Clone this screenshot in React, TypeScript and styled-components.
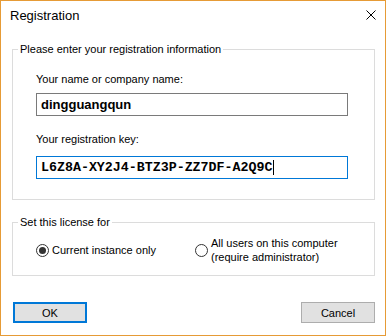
import React from "react";
import styled, { createGlobalStyle } from "styled-components";

const GlobalStyle = createGlobalStyle`
  * {
    box-sizing: border-box;
  }
  body {
    margin: 0;
    background: #fff;
  }
`;

const Window = styled.div`
  width: 386px;
  height: 336px;
  border: 1px solid #e69b36;
  background: #fff;
  display: flex;
  flex-direction: column;
  font-family: "Liberation Sans", Arial, sans-serif;
  font-size: 11px;
  color: #000;
`;

const TitleBar = styled.div`
  height: 30px;
  display: flex;
  justify-content: space-between;
  padding: 0 9px;
`;

const Title = styled.span`
  font-size: 13px;
  line-height: 30px;
`;

const CloseButton = styled.span`
  display: flex;
  margin-top: 9px;
  height: 10px;
`;

const Group = styled.fieldset<{ $top: number }>`
  margin: ${(p) => p.$top}px 10px 0 11px;
  padding: 0 5px;
  min-width: 0;
  border: 1px solid #dcdcdc;
`;

const Legend = styled.legend`
  padding: 0 2px;
  line-height: 13px;
`;

const GroupBody = styled.div<{ $pt: number; $pb: number }>`
  display: flex;
  flex-direction: column;
  padding: ${(p) => p.$pt}px 21px ${(p) => p.$pb}px 18px;
`;

const Label = styled.label<{ $top?: number }>`
  display: block;
  line-height: 13px;
  margin-top: ${(p) => p.$top ?? 0}px;
`;

const Field = styled.div<{ $focused?: boolean; $mono?: boolean; $gap: number }>`
  margin-top: ${(p) => p.$gap}px;
  height: 23px;
  display: flex;
  align-items: center;
  padding: 0 4px;
  border: 1px solid ${(p) => (p.$focused ? "#0078d7" : "#7a7a7a")};
  font-weight: bold;
  font-family: ${(p) =>
    p.$mono ? '"Liberation Mono", "Courier New", monospace' : '"Liberation Sans", Arial, sans-serif'};
  font-size: ${(p) => (p.$mono ? "13.3px" : "13px")};
  white-space: pre;
`;

const Caret = styled.span`
  width: 1px;
  height: 15px;
  margin-left: 1px;
  background: #000;
`;

const Options = styled.div`
  display: grid;
  grid-template-columns: 159px auto;
  align-items: center;
`;

const Option = styled.label`
  display: flex;
  align-items: center;
  gap: 3px;
  line-height: 14px;
`;

const Circle = styled.span<{ $checked?: boolean }>`
  flex: none;
  width: 13px;
  height: 13px;
  border: 1px solid #333;
  border-radius: 50%;
  display: grid;
  place-items: center;

  &::after {
    content: "";
    width: 7px;
    height: 7px;
    border-radius: 50%;
    background: ${(p) => (p.$checked ? "#333" : "transparent")};
  }
`;

const Buttons = styled.div`
  display: flex;
  justify-content: space-between;
  margin: 26px 10px 0 12px;
`;

const Button = styled.button<{ $default?: boolean }>`
  width: 74px;
  height: 21px;
  padding: 0;
  background: #e1e1e1;
  border: ${(p) => (p.$default ? "2px solid #0078d7" : "1px solid #adadad")};
  font-family: inherit;
  font-size: 11px;
  color: #000;
`;

const App: React.FC = () => {
  return (
    <>
      <GlobalStyle />
      <Window>
        <TitleBar>
          <Title>Registration</Title>
          <CloseButton>
            <svg width="10" height="10" viewBox="0 0 10 10">
              <path d="M0.5 0.5L9.5 9.5M9.5 0.5L0.5 9.5" stroke="#000" strokeWidth="1" fill="none" />
            </svg>
          </CloseButton>
        </TitleBar>

        <Group $top={12}>
          <Legend>Please enter your registration information</Legend>
          <GroupBody $pt={17} $pb={20}>
            <Label>Your name or company name:</Label>
            <Field $gap={7}>dingguangqun</Field>
            <Label $top={17}>Your registration key:</Label>
            <Field $gap={10} $focused $mono>
              L6Z8A-XY2J4-BTZ3P-ZZ7DF-A2Q9C
              <Caret />
            </Field>
          </GroupBody>
        </Group>

        <Group $top={16}>
          <Legend>Set this license for</Legend>
          <GroupBody $pt={7} $pb={11}>
            <Options>
              <Option>
                <Circle $checked />
                Current instance only
              </Option>
              <Option>
                <Circle />
                <span>
                  All users on this computer
                  <br />
                  (require administrator)
                </span>
              </Option>
            </Options>
          </GroupBody>
        </Group>

        <Buttons>
          <Button $default>OK</Button>
          <Button>Cancel</Button>
        </Buttons>
      </Window>
    </>
  );
};

export default App;
